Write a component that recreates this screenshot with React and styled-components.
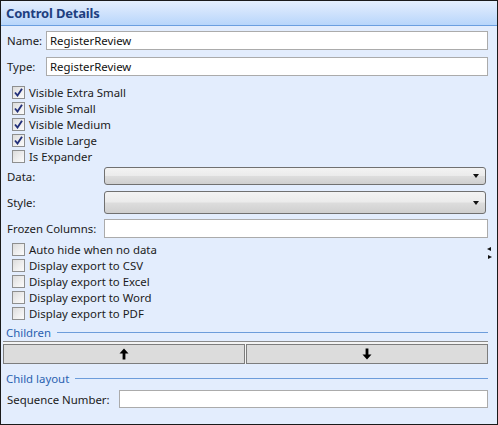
import React from 'react'
import styled, { createGlobalStyle } from 'styled-components'

const GlobalStyle = createGlobalStyle`
  html, body {
    margin: 0;
    padding: 0;
    background: #ffffff;
  }
  * {
    box-sizing: border-box;
  }
`

const Window = styled.div`
  width: 498px;
  height: 425px;
  border: 1px solid #1a1a1a;
  background: #e3edfd;
  font-family: 'Noto Sans', 'Open Sans', sans-serif;
  font-size: 11.4px;
  color: #1b1b1b;
  display: flex;
  flex-direction: column;
  position: relative;
  overflow: hidden;
`

const Header = styled.div`
  height: 25px;
  flex: none;
  background: linear-gradient(to bottom, #e4effd 0%, #cfe2fc 50%, #b8d6fb 100%);
  border-bottom: 1px solid #6b9fe0;
  display: flex;
  align-items: center;
  padding-left: 5px;
  font-size: 13px;
  font-weight: 700;
  color: #1e3f80;
  letter-spacing: -0.2px;
`

const Body = styled.div`
  flex: 1;
  display: flex;
  flex-direction: column;
  padding: 5px 9px 0 5px;
`

const FieldRow = styled.div`
  display: flex;
  align-items: center;
  height: ${({ h }) => h || 19}px;
  margin-top: ${({ gap }) => gap || 0}px;
`

const Label = styled.span`
  width: ${({ w }) => w}px;
  flex: none;
  padding-left: 1px;
  white-space: nowrap;
`

const TextBox = styled.div`
  flex: 1;
  height: 100%;
  background: #ffffff;
  border: 1px solid #ababab;
  display: flex;
  align-items: center;
  padding-left: 3px;
  color: #111;
`

const Select = styled.div`
  flex: 1;
  height: 100%;
  margin-right: 2px;
  border: 1px solid #707070;
  border-radius: 3px;
  background: linear-gradient(to bottom, #f3f3f3 0%, #ebebeb 48%, #dddddd 52%, #cfcfcf 100%);
  display: flex;
  align-items: center;
  justify-content: flex-end;
  padding-right: 6px;
`

const Arrow = styled.span`
  width: 0;
  height: 0;
  border-left: 3.5px solid transparent;
  border-right: 3.5px solid transparent;
  border-top: 4px solid #111;
`

const CheckList = styled.div`
  display: flex;
  flex-direction: column;
  margin-top: ${({ gap }) => gap}px;
  padding-left: 6px;
`

const CheckRow = styled.label`
  display: flex;
  align-items: center;
  height: 16px;
  gap: 4px;
`

const Box = styled.span`
  width: 13px;
  height: 13px;
  flex: none;
  border: 1px solid #8e8f8f;
  background: linear-gradient(135deg, #dcdcdc 0%, #f0f0f0 60%, #fbfbfb 100%);
  display: flex;
  align-items: center;
  justify-content: center;
`

const SectionHead = styled.div`
  display: flex;
  align-items: center;
  height: 16px;
  margin-top: ${({ gap }) => gap}px;
  color: #2a62b0;
  gap: 6px;
  &::after {
    content: '';
    flex: 1;
    height: 1px;
    background: #6d9ddb;
  }
`

const ButtonBar = styled.div`
  display: flex;
  margin: 1px 0 0 -3px;
  height: 23px;
  border-top: 1px solid #8a8a8a;
  padding-top: 2px;
  background: #f4f4f4;
`

const MoveButton = styled.button`
  flex: 1;
  height: 20px;
  margin: 0;
  border: 1px solid #7d7d7d;
  background: #dcdcdc;
  display: flex;
  align-items: center;
  justify-content: center;
  padding: 0;
  & + & {
    margin-left: 1px;
  }
`

const Grip = styled.div`
  position: absolute;
  right: 5px;
  top: 246px;
  display: flex;
  flex-direction: column;
  gap: 4px;
`

const GripArrow = styled.span`
  width: 0;
  height: 0;
  border-top: 2.5px solid transparent;
  border-bottom: 2.5px solid transparent;
  ${({ dir }) =>
    dir === 'left'
      ? 'border-right: 4px solid #111;'
      : 'border-left: 4px solid #111; margin-left: 1px;'}
`

const Check = ({ checked, children }) => (
  <CheckRow>
    <Box>
      {checked && (
        <svg width="9" height="9" viewBox="0 0 9 9">
          <path d="M1 4.5 L3.5 7.5 L8 0.8" fill="none" stroke="#22307a" strokeWidth="1.9" />
        </svg>
      )}
    </Box>
    <span>{children}</span>
  </CheckRow>
)

const ArrowIcon = ({ up }) => (
  <svg width="10" height="12" viewBox="0 0 10 12" style={{ transform: up ? 'none' : 'rotate(180deg)' }}>
    <path d="M5 0.5 L9.5 5.5 L6.4 5.5 L6.4 11.5 L3.6 11.5 L3.6 5.5 L0.5 5.5 Z" fill="#000" />
  </svg>
)

export default function App() {
  return (
    <>
      <GlobalStyle />
      <Window>
        <Header>Control Details</Header>
        <Body>
          <FieldRow>
            <Label w={40}>Name:</Label>
            <TextBox>RegisterReview</TextBox>
          </FieldRow>
          <FieldRow gap={7}>
            <Label w={40}>Type:</Label>
            <TextBox>RegisterReview</TextBox>
          </FieldRow>

          <CheckList gap={8}>
            <Check checked>Visible Extra Small</Check>
            <Check checked>Visible Small</Check>
            <Check checked>Visible Medium</Check>
            <Check checked>Visible Large</Check>
            <Check>Is Expander</Check>
          </CheckList>

          <FieldRow h={18} gap={3}>
            <Label w={98}>Data:</Label>
            <Select>
              <Arrow />
            </Select>
          </FieldRow>
          <FieldRow h={23} gap={6}>
            <Label w={98}>Style:</Label>
            <Select>
              <Arrow />
            </Select>
          </FieldRow>
          <FieldRow gap={5}>
            <Label w={98}>Frozen Columns:</Label>
            <TextBox />
          </FieldRow>

          <CheckList gap={3}>
            <Check>Auto hide when no data</Check>
            <Check>Display export to CSV</Check>
            <Check>Display export to Excel</Check>
            <Check>Display export to Word</Check>
            <Check>Display export to PDF</Check>
          </CheckList>

          <SectionHead gap={3}>Children</SectionHead>
          <ButtonBar>
            <MoveButton>
              <ArrowIcon up />
            </MoveButton>
            <MoveButton>
              <ArrowIcon />
            </MoveButton>
          </ButtonBar>

          <SectionHead gap={6}>Child layout</SectionHead>
          <FieldRow h={18} gap={4}>
            <Label w={113}>Sequence Number:</Label>
            <TextBox />
          </FieldRow>
        </Body>
        <Grip>
          <GripArrow dir="left" />
          <GripArrow dir="right" />
        </Grip>
      </Window>
    </>
  )
}
